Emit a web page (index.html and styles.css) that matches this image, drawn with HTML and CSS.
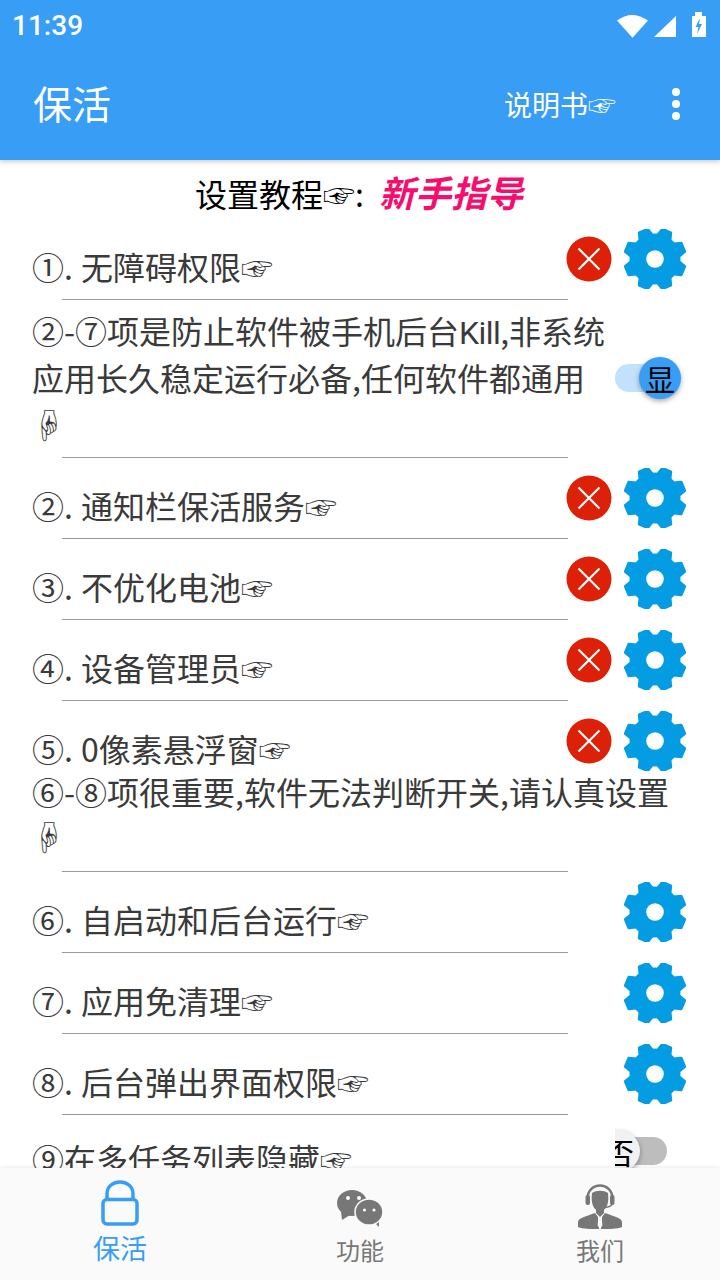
FILE: index.html
```html
<!DOCTYPE html>
<html>
	<head>
		<meta charset="utf-8">
		<title>保活</title>
		<link rel="stylesheet" href="styles.css">
	</head>
	<body>
		<svg class="defs" width="0" height="0">
			<path id="tooth" d="M-6.600 -23.100L-4.500 -30.200H4.500L6.600 -23.100Z" fill="#049ce2" stroke="#049ce2" stroke-width="3" stroke-linejoin="round"></path>
			<symbol id="gear" viewBox="-32 -30 64 60">
				<circle r="25.500" fill="#049ce2"></circle>
				<use href="#tooth" transform="rotate(22.5)"></use>
				<use href="#tooth" transform="rotate(67.5)"></use>
				<use href="#tooth" transform="rotate(112.5)"></use>
				<use href="#tooth" transform="rotate(157.5)"></use>
				<use href="#tooth" transform="rotate(202.5)"></use>
				<use href="#tooth" transform="rotate(247.5)"></use>
				<use href="#tooth" transform="rotate(292.5)"></use>
				<use href="#tooth" transform="rotate(337.5)"></use>
				<circle r="8.800" fill="#fff"></circle>
			</symbol>
			<symbol id="cross" viewBox="0 0 46 46">
				<circle cx="23" cy="23" r="22.5" fill="#dc2108"></circle>
				<path d="M12.5 12.5L33.5 33.5M33.5 12.5L12.5 33.5" stroke="#fff" stroke-width="2.2"></path>
			</symbol>
		</svg>
		<div class="app">
			<div class="top">
				<div class="status">
					<span class="clock">11:39</span>
					<svg class="status-icons" width="90" height="28" viewBox="0 0 90 28">
						<path d="M1 10Q16 -3 32 10L16.500 30Z" transform="translate(0 1) scale(1 .86)" fill="#fff"></path>
						<path d="M38 26L60 5V26Z" fill="#fff"></path>
						<path d="M76 5H79V1H86V5H90V26H76Z" fill="#fff"></path>
						<path d="M84 7L79.500 16H82.500L81 23L86 13H83Z" fill="#379df5"></path>
					</svg>
				</div>
				<div class="toolbar">
					<span class="title">保活</span>
					<span class="manual">说明书☞</span>
					<span class="more"><i></i><i></i><i></i></span>
				</div>
			</div>

			<div class="main">
				<div class="guide">设置教程☞: <em>新手指导</em></div>

				<div class="row">
					<div class="row-text">①. 无障碍权限☞</div>
					<svg class="cross"><use href="#cross"></use></svg>
					<svg class="gear"><use href="#gear"></use></svg>
				</div>
				<div class="rule"></div>

				<div class="note">
					<div class="note-text">②-⑦项是防止软件被手机后台<span class="latin">Kill</span>,非系统<br>应用长久稳定运行必备,任何软件都通用<br>☟</div>
					<div class="switch switch-on"><span class="track"></span><span class="thumb">显</span></div>
				</div>
				<div class="rule"></div>

				<div class="row">
					<div class="row-text">②. 通知栏保活服务☞</div>
					<svg class="cross"><use href="#cross"></use></svg>
					<svg class="gear"><use href="#gear"></use></svg>
				</div>
				<div class="rule"></div>

				<div class="row">
					<div class="row-text">③. 不优化电池☞</div>
					<svg class="cross"><use href="#cross"></use></svg>
					<svg class="gear"><use href="#gear"></use></svg>
				</div>
				<div class="rule"></div>

				<div class="row">
					<div class="row-text">④. 设备管理员☞</div>
					<svg class="cross"><use href="#cross"></use></svg>
					<svg class="gear"><use href="#gear"></use></svg>
				</div>
				<div class="rule"></div>

				<div class="row row-open">
					<div class="row-text">⑤. 0像素悬浮窗☞</div>
					<svg class="cross"><use href="#cross"></use></svg>
					<svg class="gear"><use href="#gear"></use></svg>
				</div>

				<div class="note note-wide">
					<div class="note-text">⑥-⑧项很重要,软件无法判断开关,请认真设置<br>☟</div>
				</div>
				<div class="rule"></div>

				<div class="row">
					<div class="row-text">⑥. 自启动和后台运行☞</div>
					<svg class="gear"><use href="#gear"></use></svg>
				</div>
				<div class="rule"></div>

				<div class="row">
					<div class="row-text">⑦. 应用免清理☞</div>
					<svg class="gear"><use href="#gear"></use></svg>
				</div>
				<div class="rule"></div>

				<div class="row">
					<div class="row-text">⑧. 后台弹出界面权限☞</div>
					<svg class="gear"><use href="#gear"></use></svg>
				</div>
				<div class="rule"></div>

				<div class="row row-last">
					<div class="row-text">⑨在多任务列表隐藏☞</div>
					<div class="switch switch-off"><span class="track"></span><span class="thumb">否</span></div>
				</div>
			</div>

			<div class="tabs">
				<div class="tab tab-active">
					<svg class="tab-lock" width="38" height="46" viewBox="0 0 38 46">
						<path d="M6 20V14C6 -2 32 -2 32 14V20" fill="none" stroke="#379df5" stroke-width="3.500"></path>
						<rect x="2" y="19.500" width="34" height="24.500" rx="4" fill="none" stroke="#379df5" stroke-width="3.500"></rect>
					</svg>
					<span>保活</span>
				</div>
				<div class="tab">
					<svg class="tab-chat" width="48" height="40" viewBox="0 0 48 40">
						<ellipse cx="16" cy="14" rx="15" ry="13" fill="#777"></ellipse>
						<path d="M5 22L6 31L14 26Z" fill="#777"></path>
						<path d="M37 32L43 38L43 29Z" fill="#777"></path>
						<ellipse cx="33" cy="23" rx="14" ry="13" fill="#777" stroke="#fafafa" stroke-width="1.500"></ellipse>
						<circle cx="12" cy="9" r="2" fill="#fafafa"></circle>
						<circle cx="23" cy="9" r="2" fill="#fafafa"></circle>
						<circle cx="28.500" cy="21" r="1.600" fill="#fafafa"></circle>
						<circle cx="38" cy="21" r="1.600" fill="#fafafa"></circle>
					</svg>
					<span>功能</span>
				</div>
				<div class="tab">
					<svg width="48" height="48" viewBox="0 0 48 48">
						<path d="M11.500 15C11.500 -3 36.500 -3 36.500 15" fill="none" stroke="#777" stroke-width="2.500"></path>
						<rect x="9.500" y="11" width="4.500" height="10" rx="2" fill="#777"></rect>
						<rect x="34" y="11" width="4.500" height="10" rx="2" fill="#777"></rect>
						<path d="M16 9C20 6 28 6 32 9C33 17 32 26 24 28C16 26 15 17 16 9Z" fill="#777"></path>
						<path d="M36 20Q35 24 24 23.500" fill="none" stroke="#777" stroke-width="1.500"></path>
						<path d="M20 24H28V29L24 33L20 29Z" fill="#777"></path>
						<path d="M2 43V38C2 34 9 33 19 29L22 33L23 45C14 45 7 45 2 43Z" fill="#777"></path>
						<path d="M46 43V38C46 34 39 33 29 29L26 33L25 45C34 45 41 45 46 43Z" fill="#777"></path>
						<path d="M22.500 33H25.500L26.500 41L24 45L21.500 41Z" fill="#fafafa"></path>
					</svg>
					<span>我们</span>
				</div>
			</div>
		</div>
	</body>
</html>
```

FILE: styles.css
```css
*{
	padding: 0;
	margin: 0;
	border: 0;
	box-sizing: border-box;
}
body{
	background-color: #fff;
	font-family: "Noto Sans CJK SC", "DejaVu Sans", sans-serif;
	color: #3a3a3a;
}
.defs{
	display: block;
	height: 0;
}
.app{
	width: 720px;
	height: 1280px;
	display: flex;
	flex-direction: column;
	overflow: hidden;
}
.top{
	background-color: #379df5;
	color: #fff;
	height: 160px;
	flex: none;
	box-shadow: 0 2px 5px rgba(0,0,0,0.2);
	position: relative;
	z-index: 2;
}
.status{
	height: 48px;
	display: flex;
	align-items: center;
	justify-content: space-between;
	padding: 2px 14px 0 12px;
}
.clock{
	font-family: Roboto, sans-serif;
	font-size: 28px;
	font-weight: 500;
}
.toolbar{
	height: 112px;
	display: flex;
	align-items: center;
	padding-left: 33px;
}
.title{
	font-size: 39px;
	flex: 1;
	padding-bottom: 4px;
}
.manual{
	font-size: 28px;
}
.more{
	width: 88px;
	margin-left: 16px;
	display: flex;
	flex-direction: column;
	align-items: center;
	gap: 4px;
}
.more i{
	width: 8px;
	height: 8px;
	border-radius: 50%;
	background-color: #fff;
}
.main{
	flex: 1;
	min-height: 0;
	overflow: hidden;
}
.guide{
	height: 59px;
	padding: 8px 2px 0 0;
	text-align: center;
	font-size: 32px;
	line-height: 46px;
	color: #000;
}
.guide em{
	font-size: 36px;
	font-weight: bold;
	color: #f50e6e;
	margin-left: 8px;
}
.row{
	height: 80px;
	display: flex;
	padding: 10px 33px 0 32px;
	align-items: flex-start;
}
.row-text{
	flex: 1;
	align-self: flex-end;
	font-size: 32px;
	line-height: 46px;
	padding-bottom: 10px;
	word-spacing: 1px;
}
.cross{
	width: 46px;
	height: 46px;
	margin-top: 7px;
	margin-right: 11px;
	flex: none;
}
.gear{
	width: 64px;
	height: 60px;
	flex: none;
}
.rule{
	height: 1px;
	width: 506px;
	margin-left: 62px;
	background-color: #999;
}
.note{
	display: flex;
	padding: 7px 0 9px 32px;
}
.note-text{
	width: 583px;
	flex: none;
	font-size: 32px;
	line-height: 47px;
}
.latin{
	font-family: Roboto, sans-serif;
	letter-spacing: -0.6px;
	line-height: 0;
}
.note-wide{
	margin-top: -2px;
	padding: 0 0 12px 32px;
}
.note-wide .note-text{
	width: 660px;
	line-height: 45px;
}
.switch{
	position: relative;
	width: 52px;
	height: 42px;
	margin-top: 50px;
	clip-path: inset(-12px -20px -12px 0);
}
.track{
	position: absolute;
	left: 0;
	right: 0;
	top: 7px;
	height: 28px;
	border-radius: 14px;
}
.thumb{
	position: absolute;
	top: 0;
	width: 42px;
	height: 42px;
	border-radius: 50%;
	text-align: center;
	font-size: 30px;
	line-height: 42px;
	color: #000;
	box-shadow: 0 2px 5px rgba(0,0,0,0.35);
}
.switch-on .track{
	background-color: #c3e1fb;
}
.switch-on .thumb{
	left: 24px;
	background-color: #379df5;
}
.switch-off .track{
	background-color: #bdbdbd;
}
.switch-off .thumb{
	left: -17px;
	background-color: #f1f1f1;
}
.row-open{
	height: 70px;
}
.row-open .row-text{
	padding-bottom: 0;
}
.row-last .switch{
	margin-top: 5px;
}
.row-last .row-text{
	flex: none;
	width: 583px;
	align-self: flex-start;
	margin-top: 10px;
}
.tabs{
	height: 112px;
	flex: none;
	display: flex;
	background-color: #fafafa;
	box-shadow: 0 -1px 4px rgba(0,0,0,0.08);
	position: relative;
}
.tab{
	flex: 1;
	display: flex;
	flex-direction: column;
	align-items: center;
	justify-content: flex-end;
	padding-bottom: 12px;
	font-size: 24px;
	line-height: 36px;
	color: #777;
}
.tab-active{
	font-size: 27px;
	color: #379df5;
	padding-bottom: 14px;
}
.tab-lock{
	margin-bottom: 4px;
}
.tab-chat{
	margin-bottom: 3px;
}
```
